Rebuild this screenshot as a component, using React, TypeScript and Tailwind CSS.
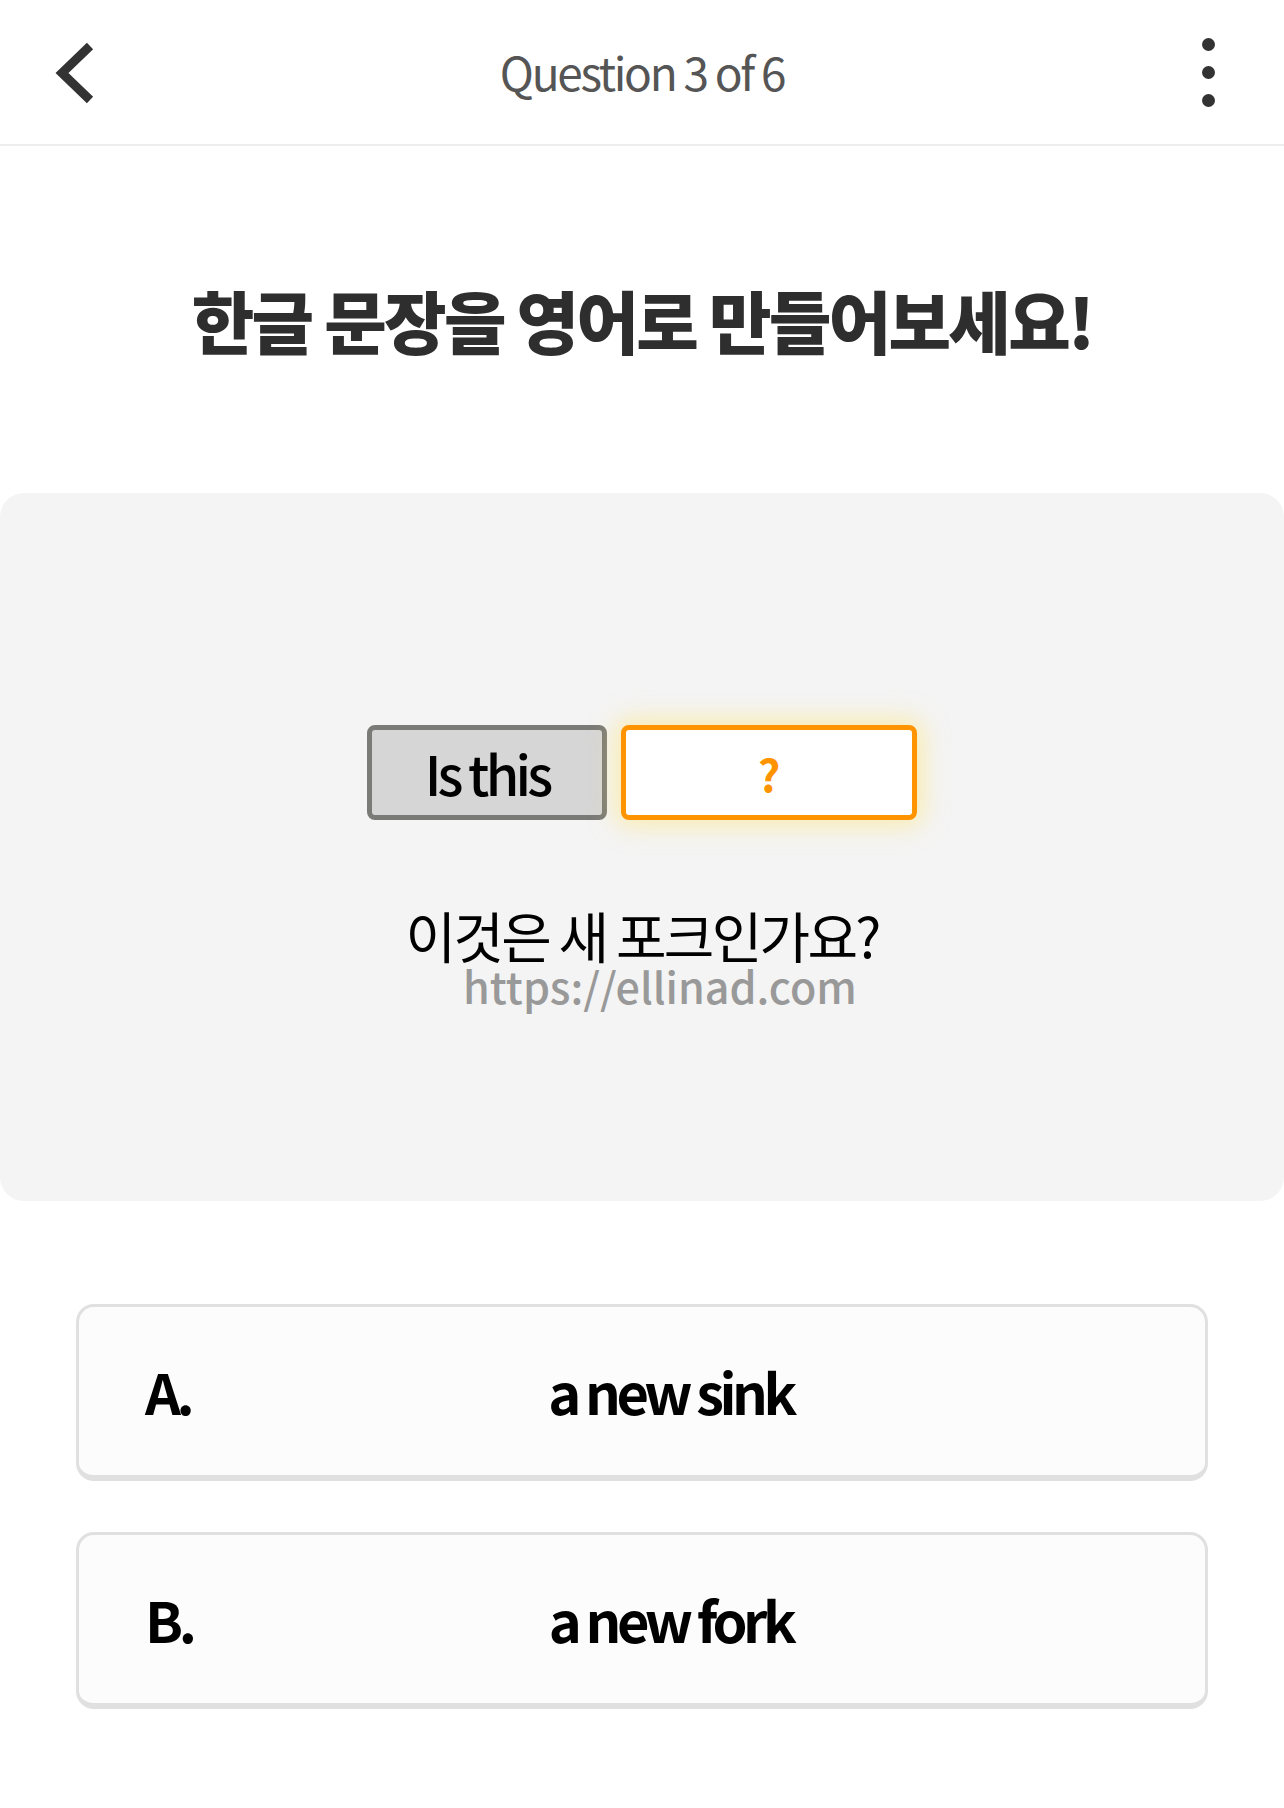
const FONT = "font-['Noto_Sans_CJK_KR','Noto_Sans',sans-serif]";

function Header() {
  return (
    <div className="relative flex h-[146px] items-center justify-center border-b-2 border-[#eeeeee]">
      <button className="absolute left-[50px] top-[42px]">
        <svg width="48" height="62" viewBox="0 0 48 62">
          <polyline
            points="40,4 12,31 40,58"
            fill="none"
            stroke="#333333"
            strokeWidth="9"
          />
        </svg>
      </button>
      <h2 className="-mt-[2px] text-[46px] tracking-[-0.05em] text-[#555555]">
        Question 3 of 6
      </h2>
      <button className="absolute right-[69px] top-[38px] flex flex-col gap-[15px]">
        <span className="h-[13px] w-[13px] rounded-full bg-[#333333]" />
        <span className="h-[13px] w-[13px] rounded-full bg-[#333333]" />
        <span className="h-[13px] w-[13px] rounded-full bg-[#333333]" />
      </button>
    </div>
  );
}

function Option({ label, text }: { label: string; text: string }) {
  return (
    <div className="flex h-[177px] items-center rounded-[18px] border-[3px] border-b-[6px] border-[#e0e0e0] bg-[#fcfcfc] px-[66px]">
      <span className="w-[57px] text-[56px] font-bold tracking-[-0.08em] text-black">
        {label}
      </span>
      <span className="flex-1 text-center text-[56px] font-bold tracking-[-0.08em] text-black">
        {text}
      </span>
    </div>
  );
}

export default function App() {
  return (
    <div className={`min-h-screen w-full bg-white ${FONT}`}>
      <Header />

      <h1 className="mt-[136px] text-center text-[68px] font-black leading-[76px] tracking-[-0.04em] text-[#2e2e2e]">
        한글 문장을 영어로 만들어보세요!
      </h1>

      <div className="mt-[135px] flex h-[708px] flex-col items-center rounded-[24px] bg-[#f4f4f4] pt-[232px]">
        <div className="flex gap-[14px]">
          <div className="flex h-[95px] w-[240px] items-center justify-center rounded-[8px] border-[5px] border-[#7a7a76] bg-[#d6d6d6]">
            <span className="text-[54px] font-medium tracking-[-0.07em] text-black">Is this</span>
          </div>
          <div className="flex h-[95px] w-[296px] items-center justify-center rounded-[8px] border-[5px] border-[#ff9400] bg-white shadow-[0_0_24px_6px_rgba(255,230,120,0.55)]">
            <span className="text-[44px] font-bold text-[#ff9400]">?</span>
          </div>
        </div>

        <p className="mt-[86px] text-[55px] leading-[56px] tracking-[-0.05em] text-black">
          이것은 새 포크인가요?
        </p>
        <p className="ml-[36px] text-[43px] font-medium leading-[46px] text-[#999999]">
          https://ellinad.com
        </p>
      </div>

      <div className="mt-[103px] flex flex-col gap-[51px] px-[76px] pb-[100px]">
        <Option label="A." text="a new sink" />
        <Option label="B." text="a new fork" />
      </div>
    </div>
  );
}
